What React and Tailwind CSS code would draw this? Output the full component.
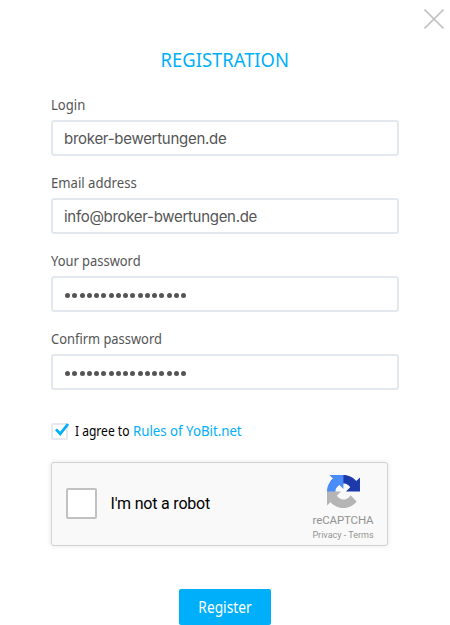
const fields = [
  { label: "Login", fit: "scale-x-[0.87]", type: "text", value: "broker-bewertungen.de", spacing: "tracking-[-0.27px]" },
  { label: "Email address", fit: "scale-x-[0.875]", type: "text", value: "info@broker-bwertungen.de", spacing: "tracking-[-0.3px]" },
  { label: "Your password", fit: "scale-x-[0.86]", type: "password", value: 17 },
  { label: "Confirm password", fit: "scale-x-[0.86]", type: "password", value: 17 },
];

function Field({ label, fit, type, value, spacing }) {
  return (
    <div className="h-[78px] w-[348px]">
      <div className="h-[26px] text-[15px] leading-5 text-[#555]">
        <span className={`inline-block origin-left whitespace-nowrap ${fit}`}>{label}</span>
      </div>
      <div className="flex h-9 items-center rounded-[3px] border-2 border-[#e3e8ee] pl-[11px] font-['Inter',sans-serif] text-[15px] text-[#555]">
        {type === "text" ? (
          <span className={`whitespace-nowrap pt-[3px] ${spacing}`}>{value}</span>
        ) : (
          <div className="flex gap-[2.25px] pl-px pt-0.5">
            {Array.from({ length: value }, (_, i) => (
              <i key={i} className="h-[5px] w-[5px] rounded-full bg-[#555]" />
            ))}
          </div>
        )}
      </div>
    </div>
  );
}

function RecaptchaLogo() {
  return (
    <svg className="block h-[33px] w-[33px]" viewBox="0 0 64 64">
      <path fill="#1c3aa9" d="M64 31.955l-.033-1.37V4.687l-7.16 7.16C50.948 4.674 42.033.093 32.05.093c-10.4 0-19.622 4.96-25.458 12.64l11.736 11.86a15.55 15.55 0 0 1 4.754-5.334c2.05-1.6 4.952-2.906 8.968-2.906.485 0 .86.057 1.135.163 4.976.393 9.288 3.14 11.828 7.124l-8.307 8.307L64 31.953" />
      <path fill="#4a8df8" d="M31.862.094l-1.37.033H4.594l7.16 7.16C4.58 13.147 0 22.06 0 32.046c0 10.4 4.96 19.622 12.64 25.458L24.5 45.768a15.55 15.55 0 0 1-5.334-4.754c-1.6-2.05-2.906-4.952-2.906-8.968 0-.485.057-.86.163-1.135.393-4.976 3.14-9.288 7.124-11.828l8.307 8.307L31.86.095" />
      <path fill="#b5b5b5" d="M.001 32.045l.033 1.37v25.898l7.16-7.16c5.86 7.173 14.774 11.754 24.76 11.754 10.4 0 19.622-4.96 25.458-12.64l-11.736-11.86a15.55 15.55 0 0 1-4.754 5.334c-2.05 1.6-4.952 2.906-8.968 2.906-.485 0-.86-.057-1.135-.163-4.976-.393-9.288-3.14-11.828-7.124l8.307-8.307c-10.522.04-22.4.066-27.295-.005" />
    </svg>
  );
}

export default function App() {
  return (
    <div className="h-[625px] w-[450px] overflow-hidden bg-white font-['Noto_Sans',sans-serif]">
      <div className="flex h-12 justify-end pr-[6px] pt-[9px]">
        <svg className="h-5 w-5" viewBox="0 0 20 20" stroke="#c3c3c3" strokeWidth="1.6">
          <path d="M.5 .5L19.5 19.5M19.5 .5L.5 19.5" />
        </svg>
      </div>
      <h1 className="flex h-[46px] justify-center text-[20px] leading-6 text-[#00affa]">
        <span className="scale-x-[0.92] whitespace-nowrap">REGISTRATION</span>
      </h1>
      <form className="flex flex-col pl-[51px]">
        {fields.map((f) => (
          <Field key={f.label} {...f} />
        ))}
        <div className="mt-[15px] flex h-5 items-center text-[14px] leading-5">
          <div className="h-[17px] w-[17px] rounded-[2px] border-2 border-[#e6eaf0]">
            <svg className="-mt-[2px] block h-[14px] w-[15px] overflow-visible" viewBox="0 0 15 14" fill="none" stroke="#00affa" strokeWidth="2.8">
              <path d="M3 6.4L7.2 10.8L15 1" />
            </svg>
          </div>
          <span className="ml-[7px] w-[58px] origin-left scale-x-[0.86] whitespace-nowrap text-black">I agree to</span>
          <a className="origin-left scale-x-[0.945] whitespace-nowrap text-[#00affa]">Rules of YoBit.net</a>
        </div>
        <div className="mt-[21px] flex h-[84px] w-[337px] items-center rounded-[3px] border border-[#d3d3d3] bg-[#f9f9f9] pl-[14px] font-['Roboto',sans-serif] shadow-[0_0_4px_1px_rgba(0,0,0,0.08)]">
          <div className="-mt-0.5 h-[31px] w-[31px] rounded-[2px] border-2 border-[#c1c1c1] bg-white" />
          <span className="ml-[13.5px] w-[202px] whitespace-nowrap text-[16px] tracking-[-0.2px] text-black">I'm not a robot</span>
          <div className="flex h-full w-[61px] flex-col items-center pt-3 text-[#939393]">
            <RecaptchaLogo />
            <span className="mt-1 text-[11.5px] leading-[16px] tracking-[-0.15px]">reCAPTCHA</span>
            <span className="whitespace-nowrap text-[9px] leading-[15px]">Privacy - Terms</span>
          </div>
        </div>
        <button type="button" className="ml-[128px] mt-[43px] flex h-9 w-[92px] items-center justify-center rounded-[2px] bg-[#00affa] text-[16px] text-white">
          <span className="scale-x-[0.86]">Register</span>
        </button>
      </form>
    </div>
  );
}
